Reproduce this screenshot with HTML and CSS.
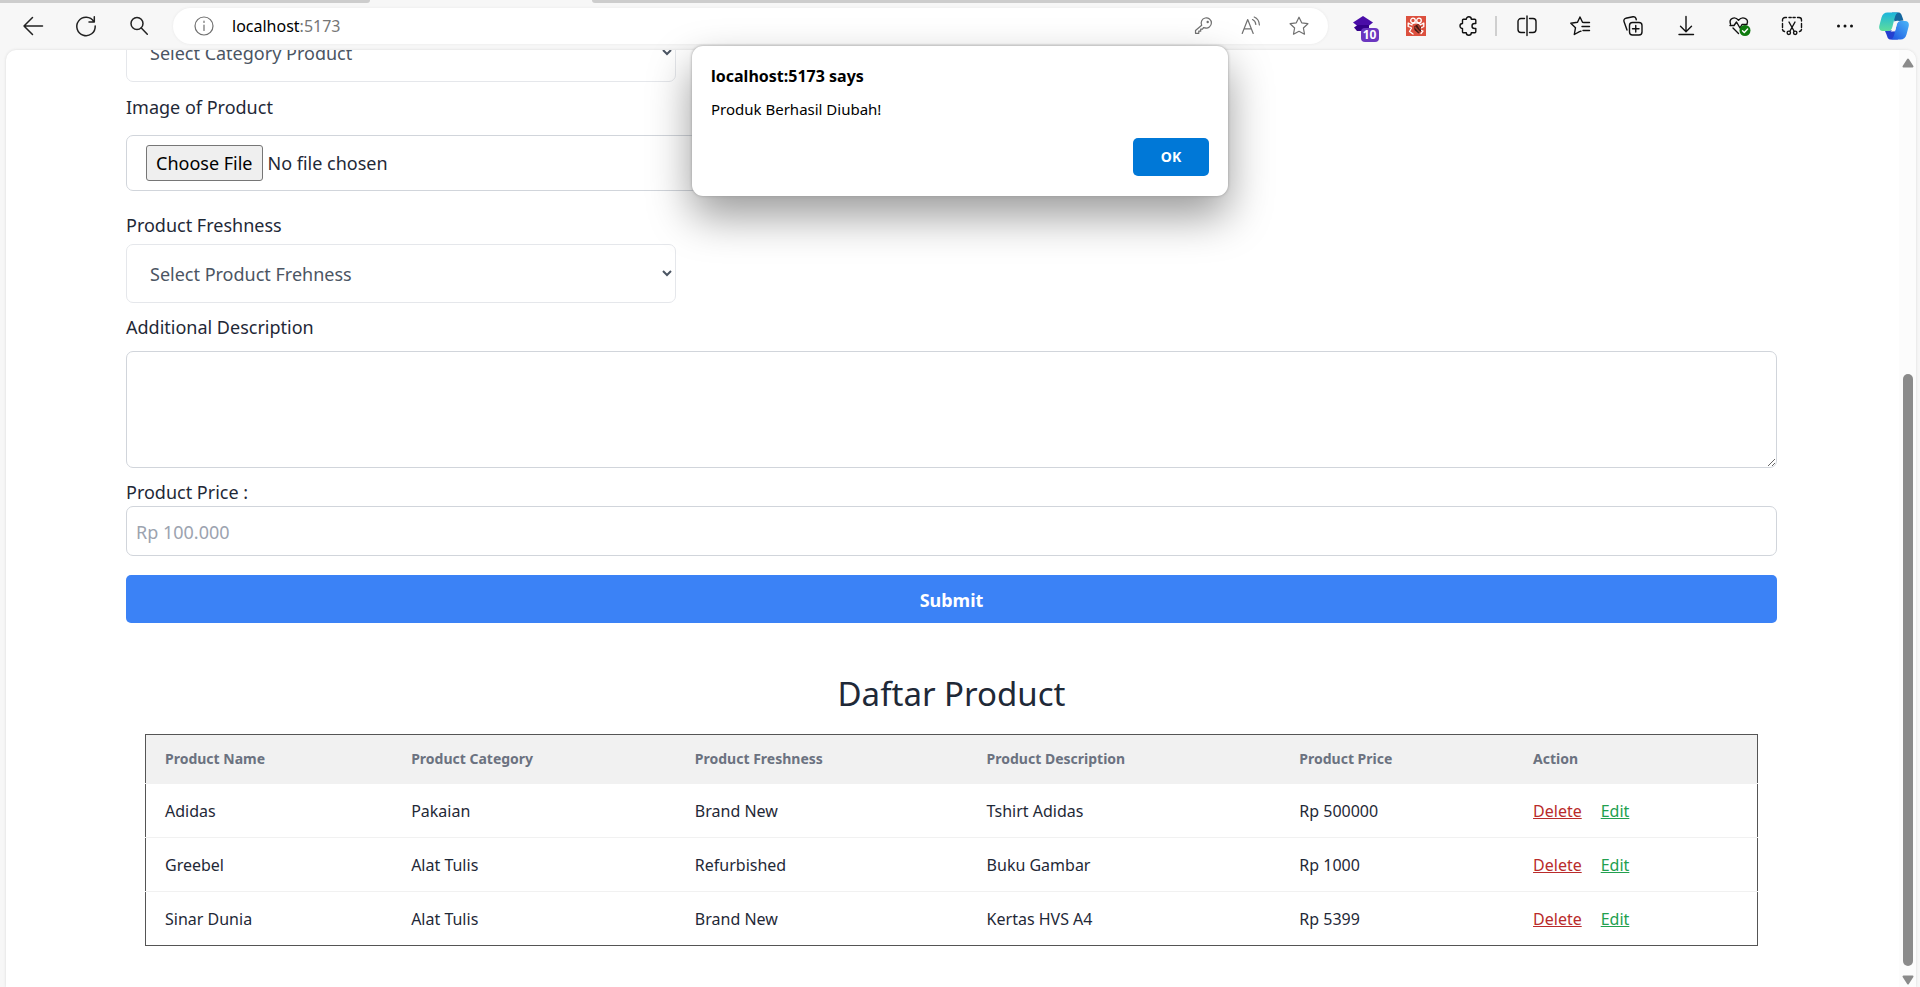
FILE: index.html
```html
<!DOCTYPE html>
<html lang="en">
<head>
<meta charset="utf-8">
<title>localhost:5173</title>
<link rel="stylesheet" href="styles.css">
</head>
<body>
<div class="tabs"><span class="tabs-left"></span><span class="tabs-active"></span><span class="tabs-right"></span></div>
<header class="toolbar">
  <nav class="nav">
    <button class="tool" aria-label="Back"><svg class="icon" viewBox="0 0 20 20"><path d="M19.5 10H1M9.500 1.500 1 10l8.500 8.500"/></svg></button>
    <button class="tool" aria-label="Refresh"><svg class="icon" viewBox="0 0 20 20"><path d="M17.800 5.600A9.200 9.200 0 1 0 19.200 10M18.300 .8v5.300h-5.300"/></svg></button>
    <button class="tool" aria-label="Search"><svg class="icon" viewBox="0 0 20 20"><circle cx="8" cy="7.500" r="6"/><path d="m12.300 12 6 6.300"/></svg></button>
  </nav>
  <div class="address">
    <button class="site-info" aria-label="Site information"><svg class="icon grey" viewBox="0 0 20 20"><circle cx="10" cy="10" r="9"/><path d="M10 9v5.500M10 5v1.500"/></svg></button>
    <span class="url">localhost<span class="port">:5173</span></span>
    <button class="in-bar" aria-label="Passwords"><svg class="icon grey" viewBox="0 0 20 20"><path d="M8.700 9.200A5.100 5.100 0 1 1 12 11.900l-1.500-.2-1 1.500H7.700v2H5.800v2.100H2.500v-2.800z"/><circle cx="14.700" cy="6" r=".6"/></svg></button>
    <button class="in-bar" aria-label="Read aloud"><svg class="icon grey" viewBox="0 0 20 20"><path d="m1.200 17.500 5.500-14 5.500 14M3 12.800h7.400M11.500 3.500c2.200 1 3.200 2.800 3.300 5M13.200 1c3.300 1.300 5 4 5.200 8"/></svg></button>
    <button class="in-bar" aria-label="Add to favorites"><svg class="icon grey" viewBox="0 0 20 20"><path d="m10 1.200 2.700 5.600 6.200.9-4.500 4.300 1.100 6.200L10 15.300l-5.500 2.900L5.600 12 1.100 7.700l6.200-.9z"/></svg></button>
  </div>
  <div class="tools">
    <button class="tool" aria-label="Extension, 10 items"><span class="ext"><svg class="icon solid" viewBox="0 0 20 20"><path fill="#4a0da8" d="M10 0 20 6.500 15.500 10H4.500L0 6.500z"/><path fill="#34008a" d="m1 11.500 3.500-2.500H16v6H4z"/></svg><span class="badge">10</span></span></button>
    <button class="tool" aria-label="Bug extension"><svg class="icon solid" viewBox="0 0 20 20"><path fill="#dc503e" d="M0 0h20v20H0z"/><g fill="none" stroke="#fff" stroke-width="1.300"><circle cx="7" cy="4.500" r="2.300"/><circle cx="13" cy="4.500" r="2.300"/><path d="M6 9 2.200 7v3.500L5 11.500M14 9l3.800-2v3.500L15 12M5.500 12 3.500 15.500 7 18M6 8c2-1.500 6-1.500 8 0M14.500 14l2.500 1-2 2.500"/></g><path fill="#401916" d="M8 10.500 12 8l3 3v4l-2.500 2.500-4-3.500z"/><path stroke="#a6402f" d="m9 11 4.500 5M12 9l2.500 4"/></svg></button>
    <button class="tool" aria-label="Extensions"><svg class="icon dark" viewBox="0 0 20 20"><path d="M4.500 3.300h2.800a2.500 2.500 0 0 1 5 0h3.500a1 1 0 0 1 1 1v3.200h-1.300a2.500 2.500 0 0 0 0 5h1.300v3.200a1 1 0 0 1-1 1h-3.500a2.500 2.500 0 0 1-5 0H4.500a1 1 0 0 1-1-1v-3.200a2.500 2.500 0 0 1 0-5V4.300a1 1 0 0 1 1-1z"/></svg></button>
    <span class="divider"></span>
    <button class="tool" aria-label="Split screen"><svg class="icon dark" viewBox="0 0 20 20"><path d="M7.500 2.500H4A3 3 0 0 0 1 5.500v8a3 3 0 0 0 3 3h3.500M12.500 2.500H16a3 3 0 0 1 3 3v8a3 3 0 0 1-3 3h-3.500M10 0v19.500"/></svg></button>
    <button class="tool" aria-label="Favorites"><svg class="icon dark" viewBox="0 0 20 20"><path d="m14 6.500-1.500-.3L10 1 7.500 6.200l-6.700 1 4.700 4.500-1.200 6.800 5.200-2.800 1.500-.5M13 6.500h6.500M12 10.500h7.500M13 14.500h6.500"/></svg></button>
    <button class="tool" aria-label="Collections"><svg class="icon dark" viewBox="0 0 20 20"><path d="M4 14 1 5.500A2.500 2.500 0 0 1 2.700 2.300L10 .8a2.500 2.500 0 0 1 3 2l.3 1"/><rect x="6.500" y="6.500" width="12.500" height="12.500" rx="3"/><path d="M12.750 9.500v6.500M9.500 12.750h6.500"/></svg></button>
    <button class="tool" aria-label="Downloads"><svg class="icon dark" viewBox="0 0 20 20"><path d="M10 .5v15M4.500 10.200 10 15.700l5.500-5.500M3 18.500h14.500"/></svg></button>
    <button class="tool" aria-label="Browser essentials"><svg class="icon dark" viewBox="0 0 20 20"><path d="M1.500 8C-.5 2 6 0 9.500 4.300 13 0 20.500 2 18 8M1 9.500h4L7.500 6l3.500 6 2-3.500h5M4 12l5.500 5.500"/><circle class="green" cx="16" cy="14.500" r="5.500"/><path class="tick" d="m13.500 14.700 1.800 1.800 3.300-3.500"/></svg></button>
    <button class="tool" aria-label="Screenshot"><svg class="icon dark" viewBox="0 0 20 20"><path d="M.5 5V4A2.500 2.500 0 0 1 3 1.500h1.500M7 1.500h2.200M11 1.500h2.200M15.500 1.500H17A2.500 2.500 0 0 1 19.500 4v1M19.500 7.500v4M.5 7.500v4M.5 13.500a2.500 2.500 0 0 0 2 2M19.500 13.500a2.500 2.500 0 0 1-2 2M7 6l5 9M13 6l-5 9"/><circle cx="6.800" cy="16.800" r="1.700"/><circle cx="13.200" cy="16.800" r="1.700"/></svg></button>
    <button class="tool" aria-label="Settings and more"><svg class="icon solid" viewBox="0 0 20 20"><circle cx="3.500" cy="10" r="1.500"/><circle cx="10" cy="10" r="1.500"/><circle cx="16.500" cy="10" r="1.500"/></svg></button>
    <button class="copilot" aria-label="Copilot"><svg viewBox="0 0 30 28"><defs><linearGradient id="ca" x1="0" y1="0" x2="0" y2="1"><stop stop-color="#1bb5dc"/><stop offset="1" stop-color="#5fdd9c"/></linearGradient><linearGradient id="cb" x1="0" y1="1" x2="1" y2="0"><stop stop-color="#1c50e0"/><stop offset="1" stop-color="#4cb8f8"/></linearGradient></defs><path fill="#15679f" d="M13 .5h6c3 0 3.500 2 4.500 5l1 3-9 1z"/><path fill="#243fd0" d="m6 19 9-1 4 9.500h-7c-3 0-3.500-2-4.500-5z"/><path fill="url(#ca)" d="M8.500.5H20c-2.500 0-3.500 2-4.500 6l-2 8c-1 3.500-2 4.500-5 4.500H4c-3.500 0-4.500-2.500-3.500-6l2-7.500C3.500 2 5.500.5 8.500.5z"/><path fill="url(#cb)" d="M21.500 27.500H11c2.500 0 3.500-2 4.500-6l2-8c1-3.500 2-4.500 5-4.500h3.500c3.500 0 4.500 2.500 3.500 6l-2 7.500c-1 3.500-3 5-6 5z"/><path fill="#f7f7f7" d="M16 9.500c1-1 2.500-1 4-.5-1.500 1-2 2.500-2.500 4.500l-1 4c-.5 1.500-1.500 2-3 2h-2c1.500-.8 2-2.500 2.500-4.500z"/></svg></button>
  </div>
</header>

<div class="viewport">
  <main class="content">
    <form class="form">
      <select class="picker" aria-label="Category of Product"><option>Select Category Product</option></select>
      <label class="label label-image" for="image">Image of Product</label>
      <input class="file" id="image" type="file">
      <label class="label label-fresh" for="fresh">Product Freshness</label>
      <select class="picker" id="fresh"><option>Select Product Frehness</option></select>
      <label class="label label-desc" for="desc">Additional Description</label>
      <textarea class="desc" id="desc"></textarea>
      <label class="label label-price" for="price">Product Price :</label>
      <input class="price" id="price" type="text" placeholder="Rp 100.000">
      <button class="submit" type="button">Submit</button>
    </form>
    <section class="products">
      <h1 class="title">Daftar Product</h1>
      <table class="table">
        <colgroup><col class="c-name"><col class="c-cat"><col class="c-fresh"><col class="c-desc"><col class="c-price"><col class="c-act"></colgroup>
        <thead><tr><th>Product Name</th><th>Product Category</th><th>Product Freshness</th><th>Product Description</th><th>Product Price</th><th>Action</th></tr></thead>
        <tbody>
          <tr><td>Adidas</td><td>Pakaian</td><td>Brand New</td><td>Tshirt Adidas</td><td>Rp 500000</td><td><a class="delete" href="#">Delete</a><a class="edit" href="#">Edit</a></td></tr>
          <tr><td>Greebel</td><td>Alat Tulis</td><td>Refurbished</td><td>Buku Gambar</td><td>Rp 1000</td><td><a class="delete" href="#">Delete</a><a class="edit" href="#">Edit</a></td></tr>
          <tr><td>Sinar Dunia</td><td>Alat Tulis</td><td>Brand New</td><td>Kertas HVS A4</td><td>Rp 5399</td><td><a class="delete" href="#">Delete</a><a class="edit" href="#">Edit</a></td></tr>
        </tbody>
      </table>
    </section>
  </main>
  <div class="scrollbar">
    <svg class="arrow" viewBox="0 0 12 10"><path d="M6 1.500 10.500 8.500h-9z"/></svg>
    <span class="track"></span><span class="thumb"></span>
    <svg class="arrow" viewBox="0 0 12 10"><path d="M6 8.500 1.500 1.500h9z"/></svg>
  </div>
</div>

<dialog class="alert" open aria-labelledby="alert-title">
  <h2 class="alert-title" id="alert-title">localhost:5173 says</h2>
  <p class="alert-text">Produk Berhasil Diubah!</p>
  <button class="ok">OK</button>
</dialog>
</body>
</html>
```
FILE: styles.css
```css
* { box-sizing: border-box; }

body {
  margin: 0;
  min-height: 100vh;
  display: flex;
  flex-direction: column;
  background: #f7f7f7;
  color: #1f2937;
  font-family: "Noto Sans", "Open Sans", sans-serif;
  font-size: 18px;
  line-height: 28px;
}

button, input, select, textarea { font: inherit; color: inherit; }
button { margin: 0; padding: 0; border: 0; background: none; }

/* browser frame */
.tabs { display: flex; height: 3px; }
.tabs-left { width: 370px; background: #cdcdcd; border-bottom-right-radius: 3px; }
.tabs-active { width: 222px; }
.tabs-right { flex: 1; background: #cdcdcd; border-bottom-left-radius: 3px; }

.toolbar { display: flex; align-items: center; height: 47px; padding: 0 11px 1px 6px; }
.nav, .tools { display: flex; align-items: center; }
.nav { margin-right: 8px; }
.tools { margin-left: 8px; }
.tool { display: flex; justify-content: center; align-items: center; width: 53px; height: 40px; }
.icon { display: block; width: 20px; height: 20px; overflow: visible; fill: none; stroke: #222; stroke-width: 1.5; stroke-linejoin: round; stroke-linecap: round; }
.grey { stroke: #707070; stroke-width: 1.2; }
.dark { stroke: #111; stroke-width: 1.4; }
.solid { fill: #111; stroke: none; }
.green { fill: #107c10; stroke: none; }
.tick { stroke: #fff; }

.address { flex: 1; display: flex; align-items: center; height: 36px; padding: 0 5px 0 21px; border-radius: 18px; background: #fff; box-shadow: 0 0 3px #e8e8e8; }
.url { flex: 1; margin-left: 18px; color: #000; font-size: 16px; line-height: 24px; }
.port { color: #767676; }
.in-bar { display: flex; justify-content: center; width: 48px; }

.ext { position: relative; }
.badge { position: absolute; left: 8px; top: 12px; width: 18px; height: 14px; border-radius: 4px; background: #6b37c0; color: #fff; font-size: 12px; line-height: 14px; font-weight: 700; text-align: center; }
.divider { width: 2px; height: 20px; margin: 0 3px 0 0; background: #cfcfcf; }
.copilot { width: 30px; height: 28px; margin-left: 8px; }
.copilot svg { display: block; width: 30px; height: 28px; }

/* page */
.viewport { flex: 1; display: flex; margin: 0 4px 0 6px; overflow: hidden; border-radius: 10px 10px 0 0; background: #fff; box-shadow: 0 0 3px #d8d8d8; }
.content { flex: 1; padding: 0 122px 0 120px; }
.scrollbar { display: flex; flex-direction: column; align-items: center; width: 17px; padding: 8px 0 2px; background: #fcfcfc; }
.arrow { width: 12px; height: 10px; fill: #8b8b8b; stroke: #8b8b8b; stroke-width: 2; stroke-linejoin: round; }
.track { flex: 306; }
.thumb { flex: 591; width: 10px; margin-bottom: 9px; border-radius: 5px; background: #8b8b8b; }

.form { display: flex; flex-direction: column; margin-top: -27px; }
.label { align-self: flex-start; }
.picker { width: 550px; height: 59px; padding: 1px 0 0 19px; border: 1px solid #e5e7eb; border-radius: 7px; background: #fff; color: #4b5563; }
.file, .desc, .price { width: 100%; border: 1px solid #d1d5db; border-radius: 7px; background: #fff; }
.label-image { margin: 11px 0 14px; }
.form .file { width: 50%; height: 56px; padding: 9px 19px; }
.file::file-selector-button { height: 36px; margin-right: 5px; padding: 0 9px; border: 1px solid #767676; border-radius: 3px; background: #efefef; color: #000; font: inherit; }
.label-fresh { margin: 20px 0 5px; }
.label-desc { margin: 10px 0; }
.desc { display: block; height: 117px; padding: 10px; resize: both; }
.label-price { margin: 10px 0 0; }
.price { height: 50px; padding: 2px 9px 0; }
.price::placeholder { color: #9ca3af; }
.submit { height: 48px; margin-top: 19px; padding-top: 2px; border-radius: 5px; background: #3b82f6; color: #fff; font-weight: 700; }

.products { padding: 47px 19px 0; }
.title { margin: 0 0 16px; font-size: 33px; line-height: 48px; font-weight: 400; text-align: center; }
.table { width: 100%; table-layout: fixed; border: 1px solid #555; border-collapse: collapse; font-size: 16px; line-height: 24px; }
.table th { height: 49px; padding: 0 19px; background: #f1f1f1; color: #6b7280; font-size: 14px; text-align: left; }
.table td { height: 54px; padding: 0 19px; }
.table tbody tr { border-top: 1px solid #f1f1f1; }
.c-name { width: 15.3%; }
.c-cat { width: 17.6%; }
.c-fresh { width: 18.1%; }
.c-desc { width: 19.4%; }
.c-price { width: 14.5%; }
.c-act { width: 15.1%; }
.delete { margin-right: 19px; color: #b92b2b; }
.edit { color: #22a04f; }

/* message box */
.alert { position: absolute; top: 46px; left: 0; right: 0; display: flex; flex-direction: column; width: 536px; margin: 0 auto; padding: 18px 19px 20px; border: 0; border-radius: 11px; background: #fff; color: #000; box-shadow: 0 0 3px #999, 0 20px 44px #0006; }
.alert-title { margin: 0; font-size: 16px; line-height: 24px; font-weight: 700; }
.alert-text { margin: 9px 0 17px; font-size: 15px; line-height: 24px; }
.ok { align-self: flex-end; width: 76px; height: 38px; border-radius: 5px; background: #0078d7; color: #fff; font-size: 14px; font-weight: 700; }
```
